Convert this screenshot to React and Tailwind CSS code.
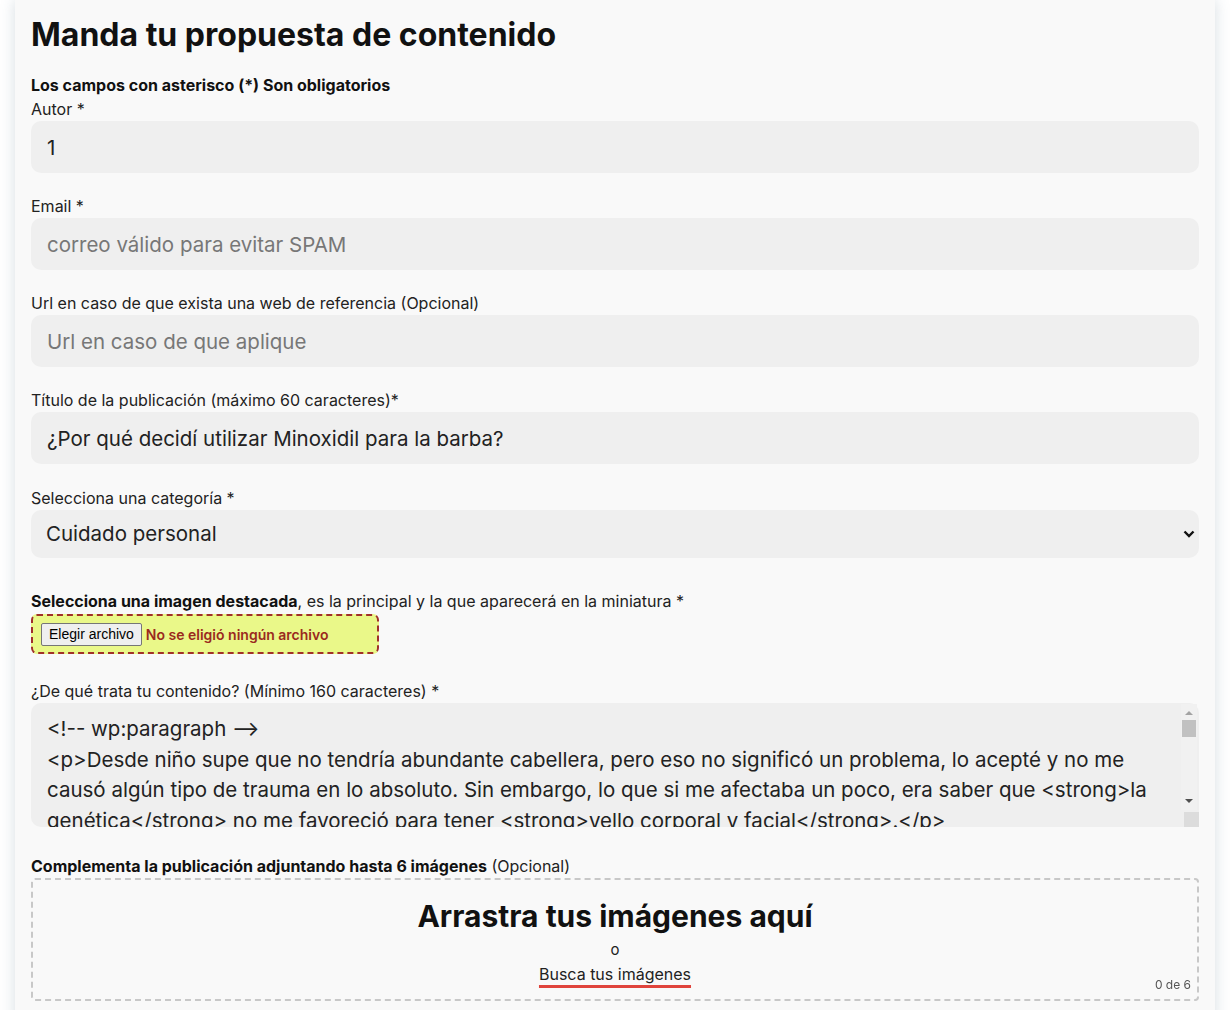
import { useState } from 'react';

const labelCls = 'block text-[16px] leading-6 text-[#222]';
const fieldCls =
  'block w-full rounded-[10px] bg-[#efefef] px-4 text-[20.5px] text-[#222] placeholder:text-[#777] outline-none';

// classic grey scrollbar for the content box
const scrollCls =
  '[&::-webkit-scrollbar]:w-[17px] [&::-webkit-scrollbar-track]:bg-[#f1f1f1] [&::-webkit-scrollbar-thumb]:bg-[#c1c1c1] [&::-webkit-resizer]:bg-[#dcdcdc]';

function Field({ label, placeholder, value, onChange, className = '' }) {
  return (
    <div className={className}>
      <label className={labelCls}>{label}</label>
      <input
        type="text"
        className={`${fieldCls} h-[52px]`}
        placeholder={placeholder}
        value={value}
        onChange={onChange}
      />
    </div>
  );
}

const sampleContent = `<!-- wp:paragraph -->
<p>Desde niño supe que no tendría abundante cabellera, pero eso no significó un problema, lo acepté y no me causó algún tipo de trauma en lo absoluto. Sin embargo, lo que si me afectaba un poco, era saber que <strong>la genética</strong> no me favoreció para tener <strong>vello corporal y facial</strong>.</p>
<!-- /wp:paragraph -->`;

export default function App() {
  const [form, setForm] = useState({
    autor: '1',
    email: '',
    url: '',
    titulo: '¿Por qué decidí utilizar Minoxidil para la barba?',
    categoria: 'Cuidado personal',
    contenido: sampleContent,
  });

  const set = (key) => (e) => setForm({ ...form, [key]: e.target.value });

  return (
    <div className="min-h-screen bg-white font-['Inter',sans-serif] px-[15px]">
      <div className="w-[1200px] bg-[#f9f9f9] px-4 pt-4 pb-6 shadow-[0_0_14px_rgba(70,100,125,0.22)]">
        <h1 className="text-[32px] leading-[38px] font-bold text-[#111]">Manda tu propuesta de contenido</h1>

        <p className="mt-[19px] text-[16px] leading-6 font-bold text-[#111]">Los campos con asterisco (*) Son obligatorios</p>

        <Field label="Autor *" value={form.autor} onChange={set('autor')} />
        <Field
          className="mt-[21px]"
          label="Email *"
          placeholder="correo válido para evitar SPAM"
          value={form.email}
          onChange={set('email')}
        />
        <Field
          className="mt-[21px]"
          label="Url en caso de que exista una web de referencia (Opcional)"
          placeholder="Url en caso de que aplique"
          value={form.url}
          onChange={set('url')}
        />
        <Field
          className="mt-[21px]"
          label="Título de la publicación (máximo 60 caracteres)*"
          value={form.titulo}
          onChange={set('titulo')}
        />

        <div className="mt-[22px]">
          <label className={labelCls}>Selecciona una categoría *</label>
          <div className="relative">
            <select
              className={`${fieldCls} h-12 appearance-none pl-[15px]`}
              value={form.categoria}
              onChange={set('categoria')}
            >
              <option>Cuidado personal</option>
              <option>Salud</option>
              <option>Tecnología</option>
            </select>
            <svg
              className="pointer-events-none absolute right-[4px] top-1/2 -translate-y-1/2"
              width="12"
              height="8"
              viewBox="0 0 12 8"
              fill="none"
            >
              <path d="M1.5 1.5 6 6l4.5-4.5" stroke="#111" strokeWidth="2.4" />
            </svg>
          </div>
        </div>

        <div className="mt-[31px]">
          <p className="text-[16px] leading-6 text-[#222]">
            <span className="font-bold text-[#111]">Selecciona una imagen destacada</span>, es la principal y la que aparecerá en la miniatura *
          </p>
          <div className="mt-px flex h-10 w-[348px] items-center gap-[4px] rounded-[6px] border-2 border-dashed border-[#a0302a] bg-[#eaf889] px-2">
            <button className="h-[23px] rounded-[2px] border border-[#767676] bg-[#efefef] px-[7px] font-['Liberation_Sans',Arial,sans-serif] text-[14px] leading-none text-black">
              Elegir archivo
            </button>
            <span className="text-[14px] font-semibold text-[#9a2a1e]">No se eligió ningún archivo</span>
          </div>
        </div>

        <div className="mt-[25px]">
          <label className={labelCls}>¿De qué trata tu contenido? (Mínimo 160 caracteres) *</label>
          <div className="relative">
            <textarea
              className={`${fieldCls} ${scrollCls} h-[124px] resize-y overflow-y-scroll py-[11px] leading-[30.7px]`}
              value={form.contenido}
              onChange={set('contenido')}
            />
            {/* scrollbar track, thumb and arrows */}
            <span className="pointer-events-none absolute right-[2px] top-[1px] bottom-[17px] w-[16px] bg-[#f1f1f1]" />
            <span className="pointer-events-none absolute right-[3px] top-[17px] h-[17px] w-[14px] bg-[#c1c1c1]" />
            <span className="pointer-events-none absolute right-[6px] top-[8px] h-0 w-0 border-x-[4px] border-b-[4px] border-x-transparent border-b-[#a3a3a3]" />
            <span className="pointer-events-none absolute right-[6px] bottom-[24px] h-0 w-0 border-x-[4px] border-t-[4px] border-x-transparent border-t-[#505050]" />
          </div>
        </div>

        <div className="mt-[27px]">
          <p className="text-[16px] leading-6 text-[#222]">
            <span className="font-bold text-[#111]">Complementa la publicación adjuntando hasta 6 imágenes</span> (Opcional)
          </p>
          <div className="relative flex h-[123px] flex-col items-center rounded-[4px] border-2 border-dashed border-[#c8c8c8] pt-[18px]">
            <h2 className="text-[30px] leading-9 font-bold text-[#111]">Arrastra tus imágenes aquí</h2>
            <span className="mt-[7px] text-[15px] leading-[18px] text-[#222]">o</span>
            <a
              href="#"
              className="mt-[5px] text-[16px] leading-[20px] text-[#222] underline decoration-[#e0443c] decoration-[3px] underline-offset-[5px]"
            >
              Busca tus imágenes
            </a>
            <span className="absolute right-[6px] bottom-[5px] text-[12px] text-[#555]">0 de 6</span>
          </div>
        </div>
      </div>
    </div>
  );
}
